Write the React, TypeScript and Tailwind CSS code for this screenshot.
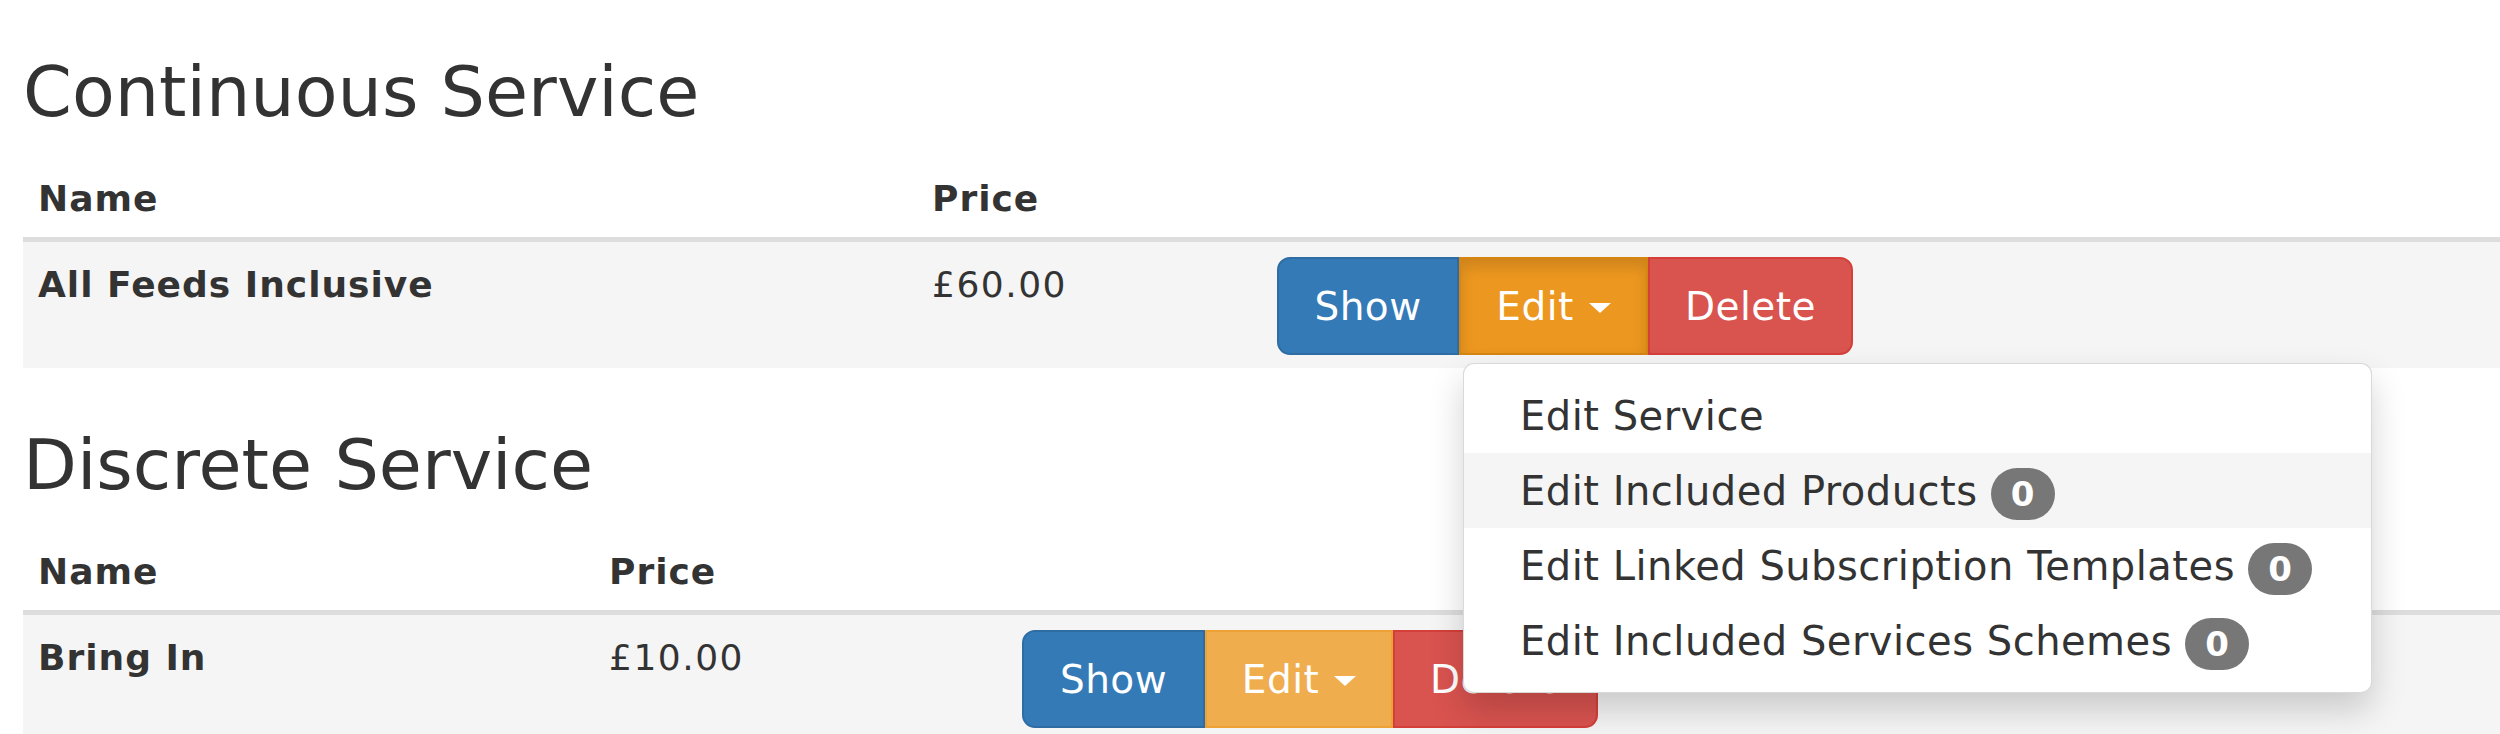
import React from "react";

type SectionProps = {
  title: string;
  name: string;
  price: string;
  headMt: string;
  col1: string;
  col2: string;
  active?: boolean;
};

function Badge() {
  return (
    <span className="ml-[13px] mt-[6px] inline-flex h-[52px] min-w-[64px] items-center justify-center rounded-full bg-[#777] px-[20px] text-[34px] font-bold leading-none tracking-normal text-white">
      0
    </span>
  );
}

function Menu() {
  const items = [
    { label: "Edit Service", badge: false, hover: false },
    { label: "Edit Included Products", badge: true, hover: true },
    { label: "Edit Linked Subscription Templates", badge: true, hover: false },
    { label: "Edit Included Services Schemes", badge: true, hover: false },
  ];
  return (
    <div className="absolute left-[4px] top-[106px] z-10 w-[909px] rounded-[11px] border border-[rgba(0,0,0,0.15)] bg-white py-[14px] shadow-[0_17px_34px_rgba(0,0,0,0.175)]">
      {items.map((it) => (
        <div
          key={it.label}
          className={`flex h-[75px] items-center whitespace-nowrap pl-[56px] text-[40px] leading-[56px] text-[#333] ${
            it.hover ? "bg-[#f5f5f5]" : ""
          }`}
        >
          <span className="tracking-[0.5px]">{it.label}</span>
          {it.badge && <Badge />}
        </div>
      ))}
    </div>
  );
}

function Buttons({ active, sizes }: { active?: boolean; sizes: [string, string, string] }) {
  return (
    <div className="flex h-[98px] text-[39px] leading-[56px] tracking-[0.5px] text-white">
      <div
        className={`flex h-full ${sizes[0]} items-center justify-center rounded-l-[13px] border-[2px] border-[#2e6da4] bg-[#337ab7] pt-[2px]`}
      >
        Show
      </div>
      <div className="relative h-full">
        <div
          className={`flex h-full ${sizes[1]} items-center justify-center gap-[15px] border-[2px] pt-[2px] ${
            active
              ? "border-[#d58512] bg-[#ec971f] shadow-[inset_0_8px_14px_rgba(0,0,0,0.13)]"
              : "border-[#eea236] bg-[#f0ad4e]"
          }`}
        >
          <span>Edit</span>
          <span className="mt-[2px] h-0 w-0 border-x-[11px] border-t-[10px] border-x-transparent border-t-white" />
        </div>
        {active && <Menu />}
      </div>
      <div
        className={`flex h-full ${sizes[2]} items-center justify-center rounded-r-[13px] border-[2px] border-[#d43f3a] bg-[#d9534f] pt-[2px]`}
      >
        Delete
      </div>
    </div>
  );
}

function Section({ title, name, price, headMt, col1, col2, active }: SectionProps) {
  return (
    <section>
      <h3 className={`${headMt} mb-[28px] text-[70px] font-normal leading-[76px] text-[#333]`}>{title}</h3>
      <div className="flex h-[84px] border-b-[5px] border-[#ddd]">
        <div className={`${col1} pl-[15px] pt-[13px] text-[36px] font-bold leading-[56px] tracking-[1px]`}>Name</div>
        <div className={`${col2} pl-[15px] pt-[13px] text-[36px] font-bold leading-[56px] tracking-[1px]`}>Price</div>
        <div className="flex-1" />
      </div>
      <div className="flex h-[126px] bg-[#f5f5f5]">
        <div className={`${col1} pl-[15px] pt-[15px] text-[36px] font-bold leading-[56px] tracking-[1px]`}>{name}</div>
        <div className={`${col2} pl-[15px] pt-[15px] text-[36px] leading-[56px] tracking-[1.5px]`}>{price}</div>
        <div className="flex-1 pl-[15px] pt-[15px]">
          <Buttons
            active={active}
            sizes={active ? ["w-[182px]", "w-[189px]", "w-[205px]"] : ["w-[183px]", "w-[188px]", "w-[205px]"]}
          />
        </div>
      </div>
    </section>
  );
}

export default function App() {
  return (
    <div className="relative h-[734px] w-[2500px] overflow-hidden bg-white font-['DejaVu_Sans','Verdana',sans-serif] text-[#333]">
      <div className="pl-[23px]">
        <Section
          title="Continuous Service"
          name="All Feeds Inclusive"
          price="£60.00"
          headMt="mt-[54px]"
          col1="w-[894px]"
          col2="w-[345px]"
          active
        />
        <Section
          title="Discrete Service"
          name="Bring In"
          price="£10.00"
          headMt="mt-[59px]"
          col1="w-[571px]"
          col2="w-[413px]"
        />
      </div>
    </div>
  );
}
